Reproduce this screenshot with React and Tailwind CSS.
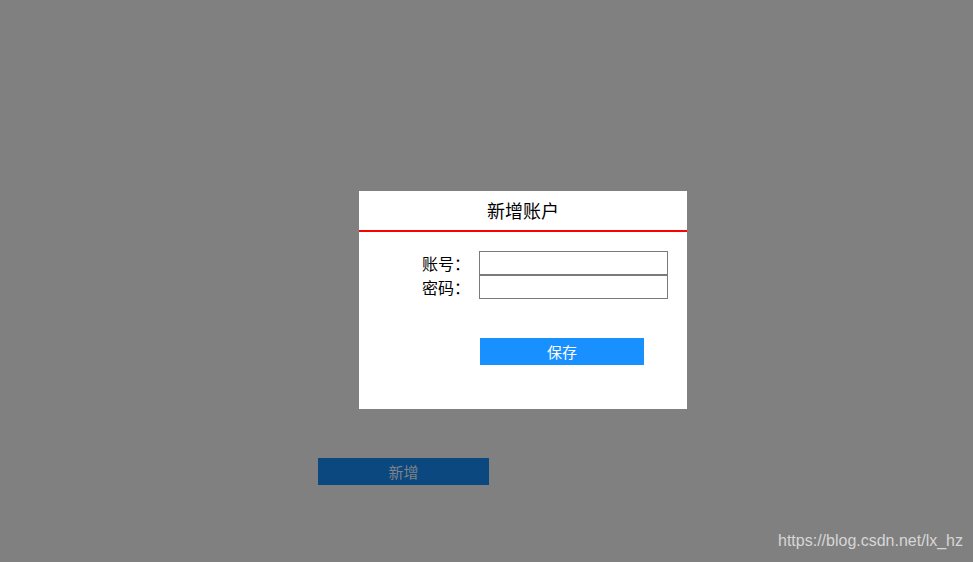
import React from 'react'

const cjk = { fontFamily: '"Noto Sans CJK SC", "Liberation Sans", sans-serif' }

function AccountModal() {
  return (
    <div className="ml-[359px] w-[328px] h-[218px] bg-white" style={cjk}>
      {/* header */}
      <div className="h-[41px] border-b-2 border-[#ff0000] flex items-center justify-center text-[18px] text-black">
        新增账户
      </div>

      {/* form */}
      <div className="pt-[19px]">
        <div className="flex items-center h-[24px]">
          <label className="w-[111px] text-right text-[16px] leading-[24px] text-black">账号：</label>
          <input className="ml-[9px] w-[189px] h-[24px] border border-[#7a7a7a] bg-white outline-none" />
        </div>
        <div className="flex items-center h-[23px]">
          <label className="w-[111px] text-right text-[16px] leading-[24px] text-black">密码：</label>
          <input type="password" className="ml-[9px] w-[189px] h-[24px] border border-[#7a7a7a] bg-white outline-none" />
        </div>
        <button className="mt-[40px] ml-[121px] w-[164px] h-[27px] bg-[#1890ff] text-white text-[15px] leading-[27px]">
          保存
        </button>
      </div>
    </div>
  )
}

export default function App() {
  return (
    <div className="w-full h-[562px] bg-[#808080] overflow-hidden pt-[191px]">
      <AccountModal />

      <button
        className="block mt-[49px] ml-[318px] w-[171px] h-[27px] bg-[#0c4880] text-[#7f8186] text-[15px] leading-[27px]"
        style={cjk}
      >
        新增
      </button>

      <div
        className="mt-[47px] pr-[10px] text-right text-[16px] leading-[18px] text-[#d6d6d6]"
        style={{ fontFamily: '"Liberation Sans", Arial, sans-serif' }}
      >
        https://blog.csdn.net/lx_hz
      </div>
    </div>
  )
}
